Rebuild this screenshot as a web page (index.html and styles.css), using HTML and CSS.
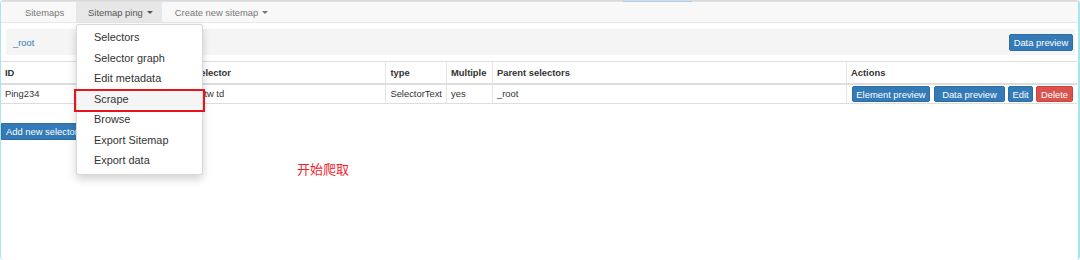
FILE: index.html
```html
<!DOCTYPE html>
<html>
<head>
<meta charset="utf-8">
<link rel="stylesheet" href="styles.css">
</head>
<body>
<div class="frame">
  <div class="topmark"></div>
  <nav class="navbar">
    <a class="tab">Sitemaps</a>
    <a class="tab active">Sitemap ping<span class="caret"></span></a>
    <a class="tab">Create new sitemap<span class="caret"></span></a>
  </nav>
  <div class="crumbs">
    <a class="crumb" href="#">_root</a>
    <button class="btn top-preview">Data preview</button>
  </div>
  <table class="grid">
    <thead>
      <tr>
        <th class="c-id">ID</th>
        <th class="c-sel">Selector</th>
        <th class="c-type">type</th>
        <th class="c-mul">Multiple</th>
        <th class="c-par">Parent selectors</th>
        <th class="c-act">Actions</th>
      </tr>
    </thead>
    <tbody>
      <tr>
        <td>Ping234</td>
        <td>td.tw td</td>
        <td>SelectorText</td>
        <td>yes</td>
        <td>_root</td>
        <td class="actions">
          <div class="btns">
            <button class="btn b-el">Element preview</button>
            <button class="btn b-dp">Data preview</button>
            <button class="btn b-ed">Edit</button>
            <button class="btn danger b-del">Delete</button>
          </div>
        </td>
      </tr>
    </tbody>
  </table>
  <div class="addrow"><button class="btn add">Add new selector</button></div>

  <ul class="menu">
    <li>Selectors</li>
    <li>Selector graph</li>
    <li>Edit metadata</li>
    <li class="hl">Scrape</li>
    <li>Browse</li>
    <li>Export Sitemap</li>
    <li>Export data</li>
  </ul>
  <div class="mark"></div>
  <div class="note">开始爬取</div>
</div>
</body>
</html>
```

FILE: styles.css
```css
* { box-sizing: border-box; }
html, body { margin: 0; padding: 0; background: #fff; }
body {
  font-family: "Liberation Sans", Arial, sans-serif;
  color: #333;
  width: 1080px;
  height: 260px;
  overflow: hidden;
}
.frame {
  position: relative;
  width: 1080px;
  height: 260px;
  border-left: 1px solid #a6e6ee;
  border-right: 2px solid #a6e6ee;
  border-top: 1px solid #d9d9d9;
  border-radius: 4px;
  overflow: hidden;
}
.topmark {
  position: absolute;
  top: -1px;
  left: 622px;
  width: 69px;
  height: 2px;
  background: #a9cdee;
}
.navbar {
  display: flex;
  height: 22px;
  background: #f8f8f8;
  border-bottom: 1px solid #e7e7e7;
  border-top: 1px solid #e2e2e2;
  padding-left: 11px;
}
.tab {
  display: flex;
  align-items: center;
  padding: 0 12px 0 13px;
  font-size: 9.4px;
  color: #777;
}
.tab.active { background: #e7e7e7; color: #555; padding: 0 9px 0 12px; }
.caret {
  display: inline-block;
  width: 0; height: 0;
  margin-left: 4px;
  border-top: 3px solid currentColor;
  border-left: 3px solid transparent;
  border-right: 3px solid transparent;
}
.crumbs {
  margin: 6px 3px 0 5px;
  height: 26px;
  background: #f5f5f5;
  display: flex;
  align-items: center;
  justify-content: space-between;
  padding: 0 2px 0 7px;
}
.crumb { color: #337ab7; font-size: 9.4px; text-decoration: none; }
.btn {
  font-family: "Liberation Sans", Arial, sans-serif;
  font-size: 9.4px;
  color: #fff;
  background: #337ab7;
  border: 1px solid #2e6da4;
  border-radius: 2px;
  height: 17px;
  padding: 0 4px;
  line-height: 15px;
  white-space: nowrap;
  text-align: center;
}
.top-preview { width: 64px; padding: 0; }
.btn.danger { background: #d9534f; border-color: #d43f3a; }
.grid {
  margin: 6px 3px 0 0;
  width: 1076px;
  border-collapse: collapse;
  font-size: 9.4px;
}
.grid th, .grid td {
  text-align: left;
  padding: 0 4px;
  border-top: 1px solid #ddd;
  border-left: 1px solid #e6e6e6;
  white-space: nowrap;
}
.grid th:first-child, .grid td:first-child { border-left: none; }
.grid th {
  height: 22px;
  font-weight: bold;
  border-bottom: 2px solid #ddd;
}
.grid td { height: 19px; border-bottom: 1px solid #ddd; }
.c-id { width: 189px; }
.c-sel { width: 197px; }
.c-type { width: 60px; }
.c-mul { width: 46px; }
.c-par { width: 355px; }
.actions { padding: 1px 4px 1px 5px !important; }
.btns { display: flex; gap: 3px; }
.btns .btn { height: 16px; padding: 0; }
.b-el { width: 78px; margin-right: 1px; }
.b-dp { width: 71px; }
.b-ed { width: 25px; }
.b-del { width: 37px; }
.addrow { padding-top: 17px; }
.btn.add { border-radius: 0 2px 2px 0; padding: 0 8px 0 4px; text-align: left; }
.menu {
  position: absolute;
  left: 75px;
  top: 23px;
  width: 127px;
  margin: 0;
  padding: 2px 0 3px;
  list-style: none;
  background: #fff;
  border: 1px solid rgba(0,0,0,0.15);
  border-radius: 3px;
  box-shadow: 0 4px 9px rgba(0,0,0,0.18);
}
.menu li {
  height: 20.5px;
  line-height: 20.5px;
  padding-left: 17px;
  font-size: 10.9px;
  color: #333;
}
.menu li.hl { background: #f5f5f5; }
.mark {
  position: absolute;
  left: 73px;
  top: 88px;
  width: 131px;
  height: 23px;
  border: 2px solid #e8131b;
}
.note {
  position: absolute;
  left: 296px;
  top: 158px;
  font-family: "Noto Sans CJK SC", sans-serif;
  font-size: 13px;
  color: #f5222d;
}
```
